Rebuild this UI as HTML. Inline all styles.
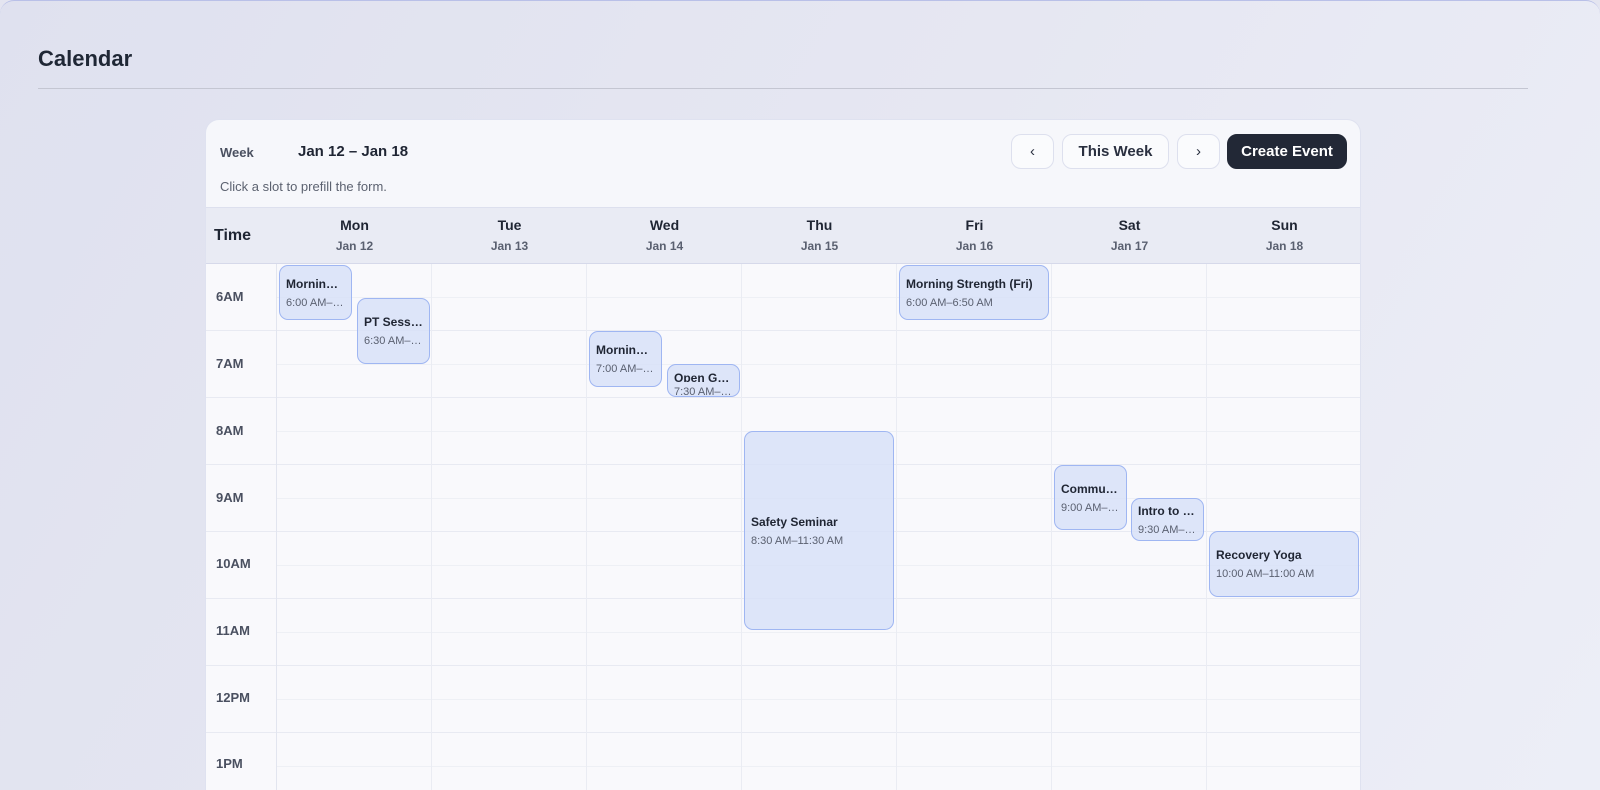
<!DOCTYPE html>
<html><head><meta charset="utf-8"><style>
*{box-sizing:border-box;margin:0;padding:0}
html,body{width:1600px;height:790px;overflow:hidden;background:#e4e5f0}
body{font-family:"Liberation Sans",sans-serif;color:#1f2533;position:relative}
.page{position:absolute;left:0;top:0;width:1600px;height:790px;border-radius:14px 14px 0 0;background:linear-gradient(120deg,#dfe1ef 0%,#e6e7f2 50%,#eceef7 100%);border-top:1px solid #b9c0e8;overflow:hidden}
h1{position:absolute;left:38px;top:45px;font-size:22px;font-weight:bold;color:#1f2735}
.hr{position:absolute;left:38px;top:87px;width:1490px;height:1px;background:#c4c6d2}
.card{position:absolute;left:205px;top:118px;width:1156px;height:690px;background:#f6f7fb;border:1px solid #dfe2f0;border-radius:14px;overflow:hidden}
.wk{position:absolute;left:14px;top:25px;font-size:13px;font-weight:bold;color:#4a5060}
.rng{position:absolute;left:92px;top:23px;font-size:15px;font-weight:bold;color:#1f2533}
.hint{position:absolute;left:14px;top:59px;font-size:13px;color:#5c6270}
.btn{position:absolute;top:14px;height:35px;border:1px solid #dde0ee;border-radius:10px;background:#fafbfd;font-size:15px;font-weight:bold;color:#2a3040;display:flex;align-items:center;justify-content:center}
.btn.dark{background:#222836;color:#fff;border-color:#222836}
.head{position:absolute;left:0;top:87px;width:1156px;height:57px;background:#e9ebf4;border-top:1px solid #dde0ee;border-bottom:1px solid #d6d9ea}
.tl{position:absolute;left:8px;top:19px;font-size:16px;font-weight:bold}
.dh{position:absolute;top:9px;width:155px;text-align:center}
.dh b{display:block;font-size:14px;color:#1f2533}
.dh span{display:block;font-size:12px;font-weight:bold;color:#5a6070;margin-top:6px}
.grid{position:absolute;left:0;top:144px;width:1156px;height:560px;background:#f9f9fc}
.hl{position:absolute;left:0;width:1156px;height:1px;background:#e8eaf2}
.hh{position:absolute;left:71px;width:1085px;height:1px;background:#eef0f5}
.vl{position:absolute;top:0;width:1px;height:560px;background:#eaecf3}
.lab{position:absolute;left:10px;font-size:13px;font-weight:bold;color:#4a5060}
.ev{position:absolute;background:rgba(214,224,248,.8);border:1px solid #9fb6f2;border-radius:9px;padding:0 6px;display:flex;flex-direction:column;justify-content:center;overflow:hidden;white-space:nowrap}
.ev b{font-size:12px;color:#1f2533;overflow:hidden;text-overflow:ellipsis}
.ev span{font-size:11px;color:#5a6070;margin-top:6px;overflow:hidden;text-overflow:ellipsis}
</style></head><body>
<div class="page">
<h1>Calendar</h1><div class="hr"></div>
<div class="card">
<div class="wk">Week</div><div class="rng">Jan 12 – Jan 18</div>
<div class="hint">Click a slot to prefill the form.</div>
<div class="btn" style="left:805px;width:43px;font-weight:normal">‹</div>
<div class="btn" style="left:856px;width:107px">This Week</div>
<div class="btn" style="left:971px;width:43px;font-weight:normal">›</div>
<div class="btn dark" style="left:1021px;width:120px">Create Event</div>
<div class="head">
<div class="tl">Time</div>
<div class="dh" style="left:71px"><b>Mon</b><span>Jan 12</span></div>
<div class="dh" style="left:226px"><b>Tue</b><span>Jan 13</span></div>
<div class="dh" style="left:381px"><b>Wed</b><span>Jan 14</span></div>
<div class="dh" style="left:536px"><b>Thu</b><span>Jan 15</span></div>
<div class="dh" style="left:691px"><b>Fri</b><span>Jan 16</span></div>
<div class="dh" style="left:846px"><b>Sat</b><span>Jan 17</span></div>
<div class="dh" style="left:1001px"><b>Sun</b><span>Jan 18</span></div>
</div>
<div class="grid">
<div class="hh" style="top:33px"></div><div class="hl" style="top:66px"></div>
<div class="hh" style="top:100px"></div><div class="hl" style="top:133px"></div>
<div class="hh" style="top:167px"></div><div class="hl" style="top:200px"></div>
<div class="hh" style="top:234px"></div><div class="hl" style="top:267px"></div>
<div class="hh" style="top:301px"></div><div class="hl" style="top:334px"></div>
<div class="hh" style="top:368px"></div><div class="hl" style="top:401px"></div>
<div class="hh" style="top:435px"></div><div class="hl" style="top:468px"></div>
<div class="hh" style="top:502px"></div><div class="hl" style="top:535px"></div>
<div class="vl" style="left:70px;background:#e2e5ef"></div>
<div class="vl" style="left:225px"></div><div class="vl" style="left:380px"></div>
<div class="vl" style="left:535px"></div><div class="vl" style="left:690px"></div>
<div class="vl" style="left:845px"></div><div class="vl" style="left:1000px"></div>
<div class="lab" style="top:25px">6AM</div>
<div class="lab" style="top:92px">7AM</div>
<div class="lab" style="top:159px">8AM</div>
<div class="lab" style="top:226px">9AM</div>
<div class="lab" style="top:292px">10AM</div>
<div class="lab" style="top:359px">11AM</div>
<div class="lab" style="top:426px">12PM</div>
<div class="lab" style="top:492px">1PM</div>
</div>
<div class="ev" style="left:73px;top:145px;width:73px;height:55px"><b>Morning Run</b><span>6:00 AM–6:50 AM</span></div>
<div class="ev" style="left:151px;top:178px;width:73px;height:66px"><b>PT Session</b><span>6:30 AM–7:30 AM</span></div>
<div class="ev" style="left:383px;top:211px;width:73px;height:56px"><b>Morning Yoga</b><span>7:00 AM–7:50 AM</span></div>
<div class="ev" style="left:461px;top:244px;width:73px;height:33px;justify-content:flex-start;padding-top:6px"><b>Open Gym</b><span style="margin-top:4px">7:30 AM–8:00 AM</span></div>
<div class="ev" style="left:538px;top:311px;width:150px;height:199px"><b>Safety Seminar</b><span>8:30 AM–11:30 AM</span></div>
<div class="ev" style="left:693px;top:145px;width:150px;height:55px"><b>Morning Strength (Fri)</b><span>6:00 AM–6:50 AM</span></div>
<div class="ev" style="left:848px;top:345px;width:73px;height:65px"><b>Community Run</b><span>9:00 AM–10:00 AM</span></div>
<div class="ev" style="left:925px;top:378px;width:73px;height:43px"><b>Intro to Lifting</b><span>9:30 AM–10:10 AM</span></div>
<div class="ev" style="left:1003px;top:411px;width:150px;height:66px"><b>Recovery Yoga</b><span>10:00 AM–11:00 AM</span></div>
</div>
</div>
</body></html>
